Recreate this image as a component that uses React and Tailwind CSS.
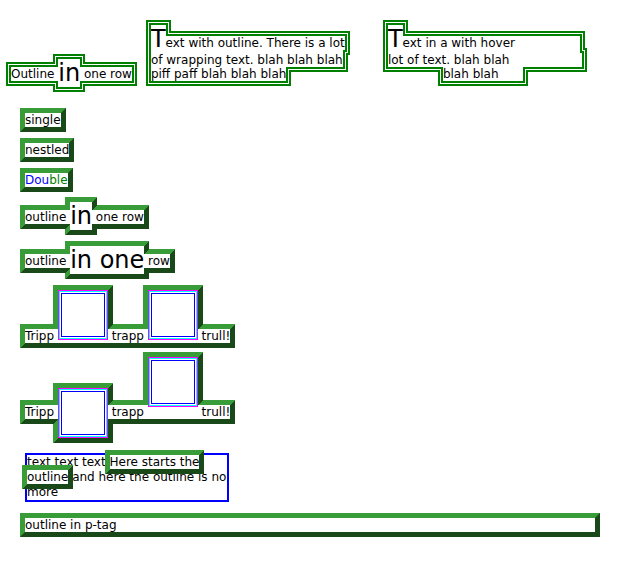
import React from "react";

const O = "[outline:5px_outset_#389c38]";
const D = "[outline:5px_double_#008000]";

function Pic({ cls }) {
  return (
    <span className={"inline-block w-[50px] h-[50px] border border-[#ff00ff] bg-white " + cls}>
      <span className="block h-full border border-[#00ffff] p-[1px]">
        <span className="block h-full border border-[#0000ff]"></span>
      </span>
    </span>
  );
}

export default function App() {
  return (
    <div className="min-h-[570px] w-[620px] bg-white text-black text-[12px] leading-[normal] font-['DejaVu_Sans',sans-serif]">
      <div className="pt-[25px] pl-[11px] whitespace-nowrap">
        <span className={D}>
          Outline <span className="inline-block text-[24px] align-sub">in</span> one row
        </span>
        <span className="inline-block w-[200px] ml-[19px] whitespace-normal">
          <span className={D}>
            <span className="inline-block text-[24px]">T</span>ext with outline. There is a lot of wrapping text. blah blah blah piff paff blah blah blah
          </span>
        </span>
        <span className="inline-block w-[200px] ml-[37px] whitespace-normal">
          <span className="float-left w-[55px] h-[56px] [shape-outside:inset(44px_0_0_0)]"></span>
          <span className={D}>
            <span className="inline-block text-[24px]">T</span>ext in a with hover<span className="inline-block w-[65px] h-0"></span>
            <br />
            lot of text. blah blah<span className="inline-block w-[73px] h-0"></span>
            <br />
            blah blah<span className="inline-block w-[24px] h-0"></span>
          </span>
        </span>
      </div>

      <div className="mt-[26px] pl-[25px]">
        <span className={O}>single</span>
      </div>
      <div className="mt-[16px] pl-[25px]">
        <span className={O}>
          <span className={O}>nestled</span>
        </span>
      </div>
      <div className="mt-[16px] pl-[25px]">
        <span className={O}>
          <span className="text-[#0000ff]">Dou</span>
          <span className="text-[#008000]">ble</span>
        </span>
      </div>
      <div className="mt-[15px] pl-[25px]">
        <span className={O}>
          outline <span className="inline-block text-[24px] align-sub">in</span> one row
        </span>
      </div>
      <div className="mt-[16px] pl-[25px]">
        <span className={O}>
          outline <span className="inline-block text-[24px] align-sub whitespace-nowrap">in one</span> row
        </span>
      </div>
      <div className="mt-[16px] pl-[25px]">
        <span className={O}>
          Tripp <Pic cls="align-baseline" /> trapp <Pic cls="align-baseline" /> trull!
        </span>
      </div>
      <div className="mt-[14px] pl-[25px]">
        <span className={O}>
          Tripp <Pic cls="align-middle" /> trapp <Pic cls="align-[9px]" /> trull!
        </span>
      </div>
      <div className="mt-[15px] ml-[25px] w-[204px] border-2 border-[#0000ff] leading-[15px]">
        text text text <span className={O}>Here starts the outline</span> and here the outline is no more
      </div>
      <p className={"mt-[16px] ml-[25px] w-[570px] " + O}>outline in p-tag</p>
    </div>
  );
}
